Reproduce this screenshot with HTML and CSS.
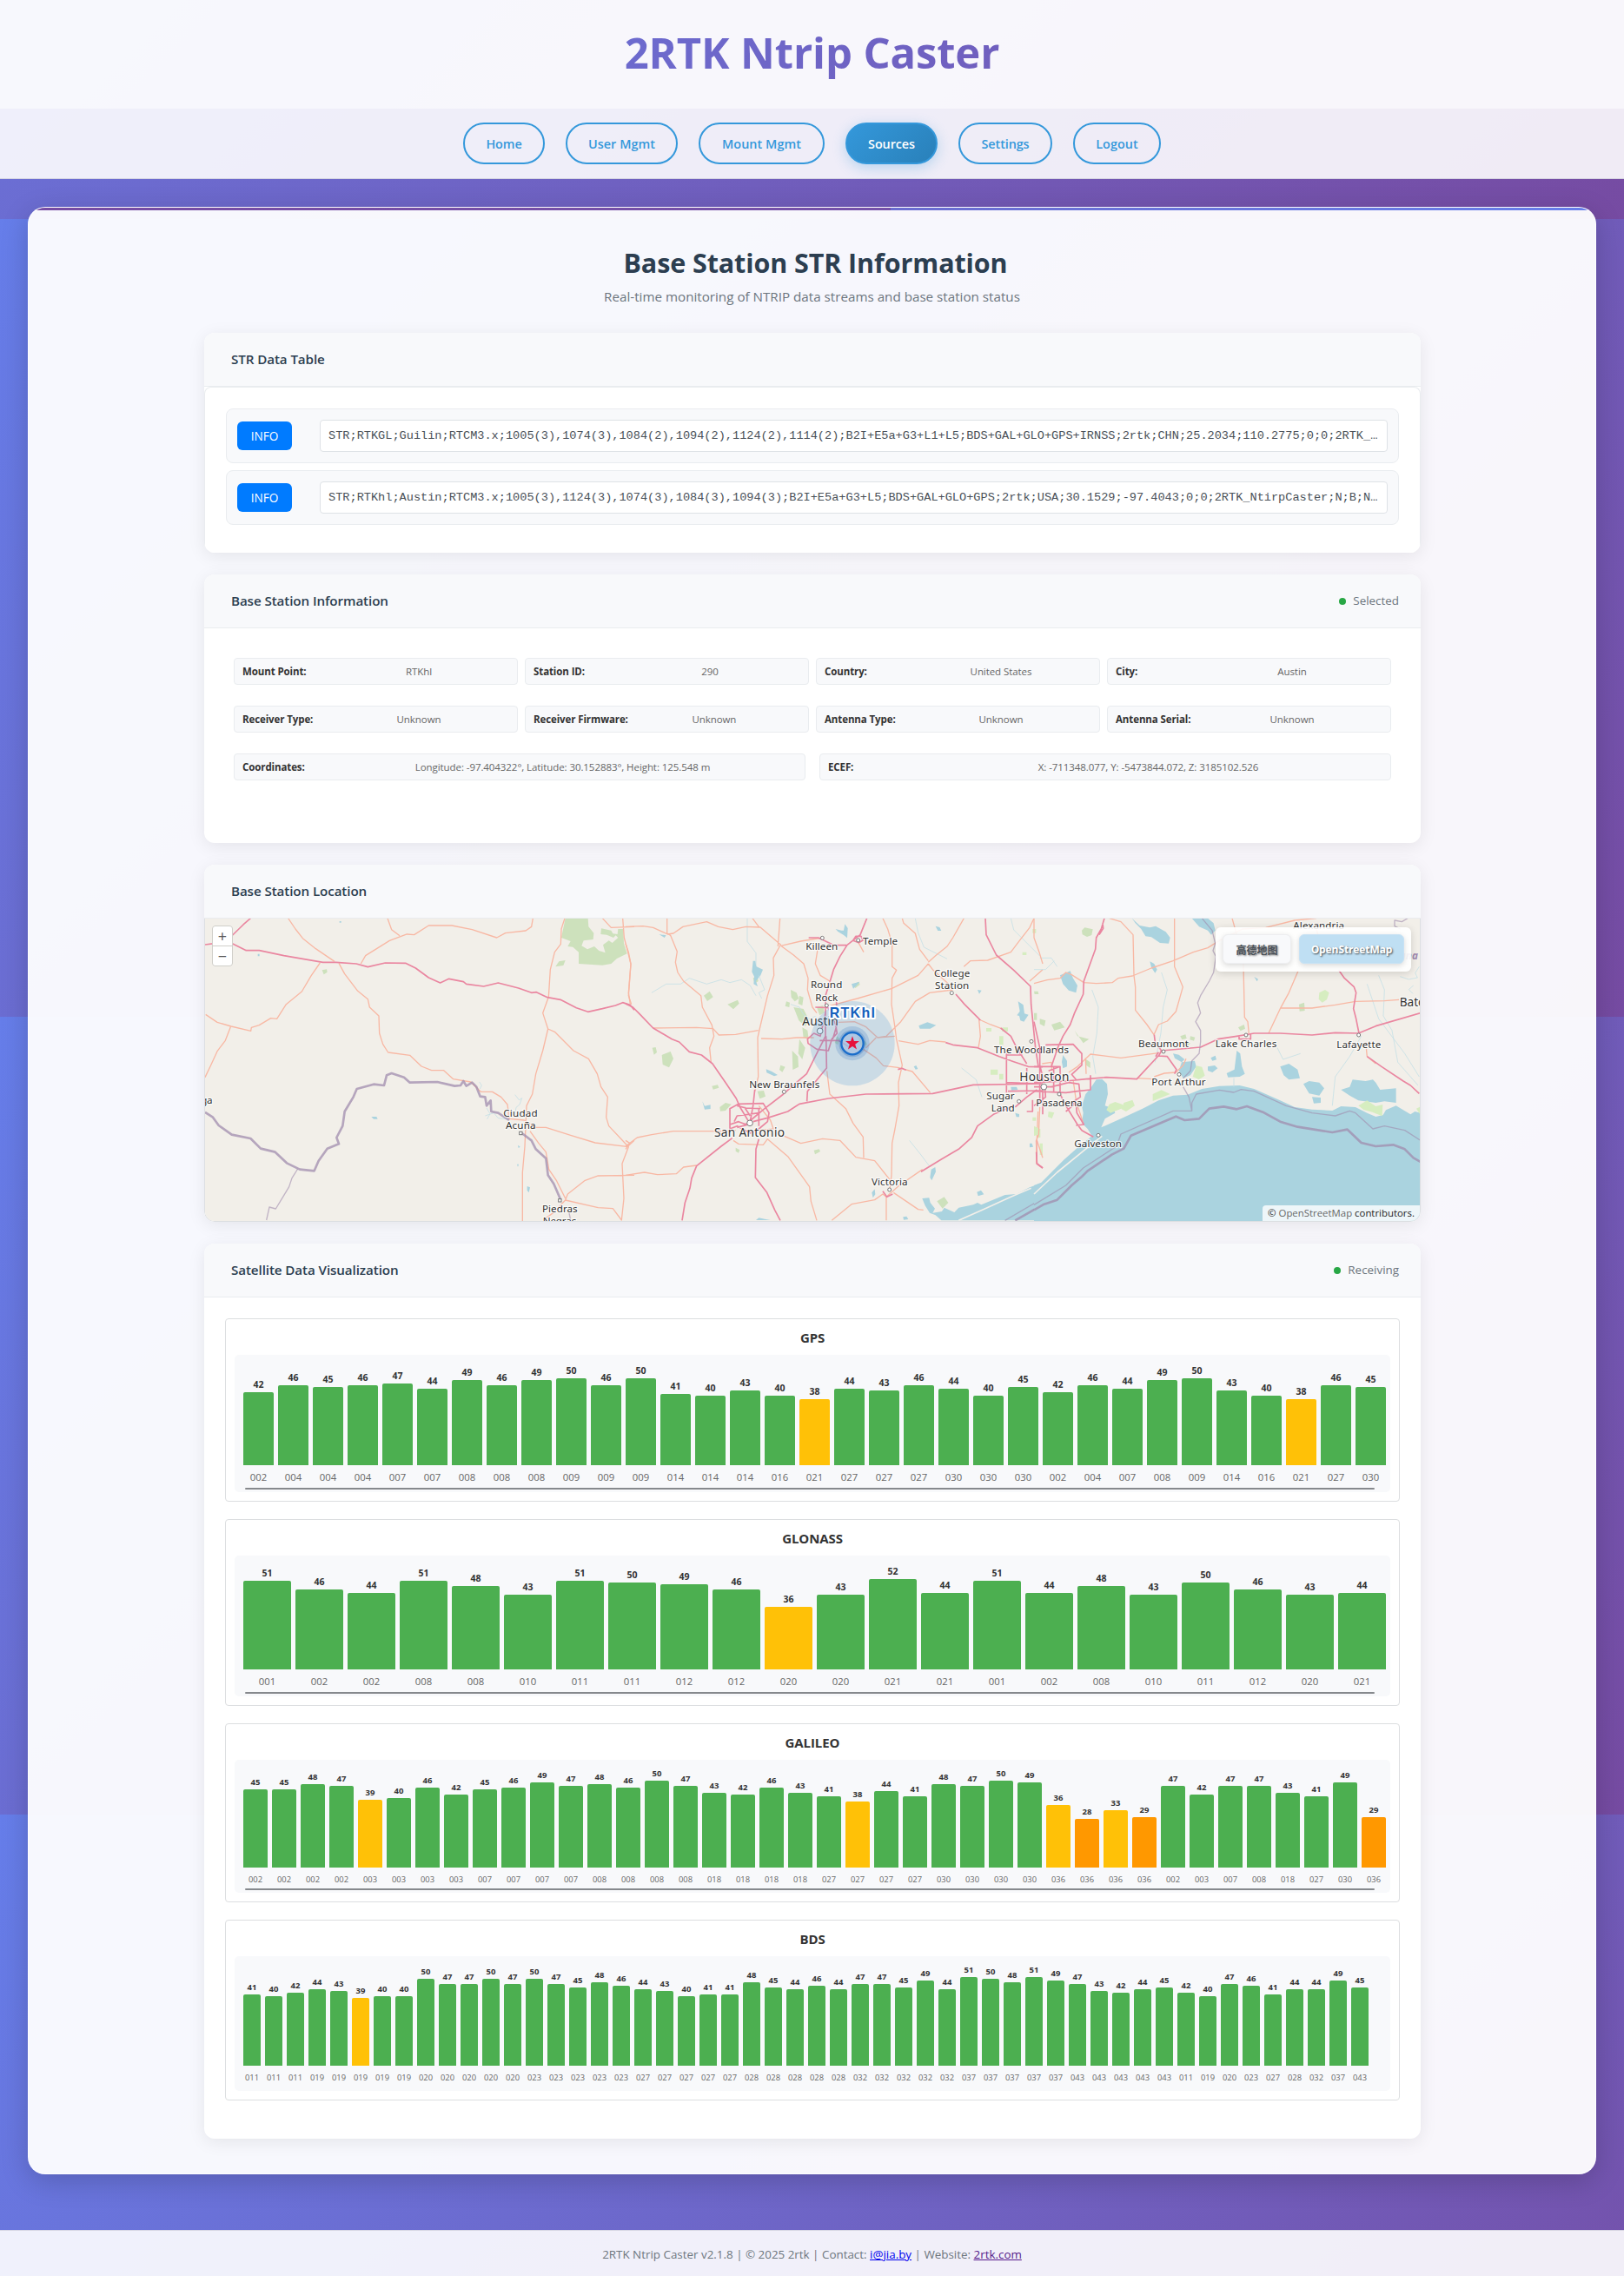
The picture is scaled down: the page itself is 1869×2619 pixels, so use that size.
FILE: index.html
```html
<!DOCTYPE html>
<html lang="en">
<head>
<meta charset="utf-8">
<title>2RTK Ntrip Caster</title>
<link rel="stylesheet" href="styles.css">
</head>
<body>
<header class="site-header"><h1>2RTK Ntrip Caster</h1></header>
<nav class="site-nav">
  <a class="nav-home">Home</a>
  <a class="nav-user">User Mgmt</a>
  <a class="nav-mount">Mount Mgmt</a>
  <a class="nav-sources active">Sources</a>
  <a class="nav-settings">Settings</a>
  <a class="nav-logout">Logout</a>
</nav>

<main class="content">
  <div class="accent"></div>
  <h2>Base Station STR Information</h2>
  <p class="subtitle">Real-time monitoring of NTRIP data streams and base station status</p>

  <section class="panel str-panel">
    <div class="panel-head"><h3>STR Data Table</h3></div>
    <div class="str-list">
      <div class="str-row"><span class="info-btn">INFO</span><code>STR;RTKGL;Guilin;RTCM3.x;1005(3),1074(3),1084(2),1094(2),1124(2),1114(2);B2I+E5a+G3+L1+L5;BDS+GAL+GLO+GPS+IRNSS;2rtk;CHN;25.2034;110.2775;0;0;2RTK_…</code></div>
      <div class="str-row"><span class="info-btn">INFO</span><code>STR;RTKhl;Austin;RTCM3.x;1005(3),1124(3),1074(3),1084(3),1094(3);B2I+E5a+G3+L5;BDS+GAL+GLO+GPS;2rtk;USA;30.1529;-97.4043;0;0;2RTK_NtirpCaster;N;B;N…</code></div>
    </div>
  </section>

  <section class="panel info-panel">
    <div class="panel-head"><h3>Base Station Information</h3><span class="status"><i></i>Selected</span></div>
    <div class="info-body">
      <div class="info-grid">
        <div class="cell"><b>Mount Point:</b><span>RTKhl</span></div>
        <div class="cell"><b>Station ID:</b><span>290</span></div>
        <div class="cell"><b>Country:</b><span>United States</span></div>
        <div class="cell"><b>City:</b><span>Austin</span></div>
        <div class="cell"><b>Receiver Type:</b><span>Unknown</span></div>
        <div class="cell"><b>Receiver Firmware:</b><span>Unknown</span></div>
        <div class="cell"><b>Antenna Type:</b><span>Unknown</span></div>
        <div class="cell"><b>Antenna Serial:</b><span>Unknown</span></div>
      </div>
      <div class="info-wide">
        <div class="cell"><b>Coordinates:</b><span>Longitude: -97.404322°, Latitude: 30.152883°, Height: 125.548 m</span></div>
        <div class="cell"><b>ECEF:</b><span>X: -711348.077, Y: -5473844.072, Z: 3185102.526</span></div>
      </div>
    </div>
  </section>

  <section class="panel map-panel">
    <div class="panel-head"><h3>Base Station Location</h3></div>
    <div class="map">
      <svg class="map-svg" viewBox="236 1058 1398 348" preserveAspectRatio="none">
        <rect x="230" y="1050" width="1410" height="360" fill="#f2efe9"/>
        <!-- western sheet -->
        <g transform="translate(230 980) scale(.33333)">
          <path class="wood" d="M1262 233L1340 233L1342 262L1360 284L1358 306L1325 310L1318 328L1338 340L1362 330L1378 345L1400 352L1392 325L1412 310L1424 318L1444 300L1436 292L1428 300L1405 290L1384 288L1386 268L1420 275L1426 286L1442 288L1444 270L1462 270L1464 320L1475 355L1440 372L1420 390L1390 395L1308 390L1308 350L1288 332L1270 330L1280 312L1248 300ZM1228 400L1240 382L1262 378L1255 396ZM422 412l16-3 2 10-12 8z"/>
          <path class="lake" d="M592 918l18 0 4 8-14 0zM200 356h6v8h-6zM482 243h6v5h-6zM1130 1158l10 4-4 18-6-8zM1095 1082l6 0-3 9zM1098 1016l8 6-6 4z"/>
          <path class="river" d="M985 915l30-10 15 18 40 4M990 888l12 20-10 18M1088 842l14 18 10-6-8 22-12 10-4 22M965 798l8 12-6 12"/>
          <path class="trunk" d="M305 233L330 270L355 302L400 338L465 382M415 387L385 430L352 486L298 530L266 580L245 578L205 602L178 610L176 622L108 606L60 592L20 565M106 608L88 655L60 692L38 740L18 782M480 388L500 425L545 484L580 512L586 540L618 570L620 630L632 668L650 696L725 706L765 744L800 758L842 758L875 788L935 798L970 832L1010 832L1040 850L1062 876L1068 925L1120 930M556 390L572 362L655 310L715 288L740 290L790 258L870 258L940 272L1025 300L1055 284L1125 276L1145 262L1150 233M648 233L662 272L690 293M1260 233L1248 270L1246 322L1225 350L1210 410L1204 505L1184 560L1202 615L1184 690L1160 770L1148 840L1128 880L1122 1020L1114 1110L1114 1280M1202 615L1225 625L1290 690L1342 718L1372 770L1385 815L1408 850L1403 920L1412 950L1478 1020L1500 1000M1140 968L1170 1010L1195 1040L1205 1100L1232 1140L1262 1200M1120 930L1160 955L1195 955L1280 982L1365 1008L1480 1022L1458 1080L1460 1120L1464 1200L1456 1275L1426 1235L1375 1232L1262 1206L1270 1185L1330 1138L1375 1122L1500 1120M1390 233L1420 265L1500 262M1460 233L1465 300L1478 350L1488 392L1480 490L1486 530M1262 1206L1220 1250L1185 1275"/>
          <path class="motor" d="M18 324L50 320M110 294L150 255L175 233M112 320L160 344L205 344L290 362L425 385L470 385L540 390L580 401L640 387L710 388L745 405L790 438L830 456L860 442L910 452L920 460L980 468L1030 456L1100 474L1145 490L1162 488L1200 506L1245 514L1300 542L1340 556L1390 545L1435 534L1460 524L1485 532L1500 550"/>
          <path class="border" d="M18 903L45 920L65 948L110 980L175 993L210 1028L260 1040L300 1078L345 1100L395 1105L410 1070L440 1028L480 1012L472 990L493 950L500 900L530 850L542 822L600 806L636 810L645 775L662 768L705 782L725 800L820 798L880 812L900 810L910 795L920 812L940 800L955 815L968 848L985 850L990 880L1004 862L1006 900L1030 905L1068 930M1112 975L1145 1000L1160 1030L1195 1062L1202 1120L1222 1150L1246 1205"/>
          <path class="border-thin" d="M338 1098L318 1130L308 1160L290 1190L262 1236L240 1230L230 1275M1275 1250l5 25"/>
          <g class="dots"><rect x="1103" y="970" width="10" height="10"/><rect x="1238" y="1202" width="10" height="10"/></g>
          <g class="town"><text x="1048" y="918" textLength="118">Ciudad</text><text x="1056" y="960" textLength="104">Acuña</text><text x="1182" y="1247" textLength="122">Piedras</text><text x="1184" y="1289" textLength="116">Negras</text><text x="4" y="872" textLength="40">ga</text></g>
        </g>
        <!-- central sheet -->
        <g transform="translate(720 980) scale(.33333)">
          <path class="wood" d="M125 705l30-12 10 25-15 30-22-10zM92 680l12-2 4 18-10 8zM270 500l20-15 12 20-20 14zM352 530l35-15 5 12-20 20zM440 440l14-10 4 20-12 8zM325 885l20-15 20 5-20 22-18 2zM455 830l22-2 6 20-20 8zM298 812l20-4 4 10-20 6zM570 480l20 10 8 20-14 10-12-14zM600 500l14 6-4 28-14-6zM555 520l12 4-2 16-14-4zM580 540l34 6 20 40-14 20-22-20zM610 610l18 10 4 30-18-4zM600 650l20 30-10 40-14-20zM575 690l20 20 2 36-20 10zM535 740l16 6-10 18-10-8zM783 462l22-10 4 10-16 12zM660 540l22-6 4 24-16 10zM730 640l10 10-8 20-10-8zM800 640l30 20 4 10-20 4zM380 1025l14 8-4 10-10-6zM650 1034l18-4 4 8-18 10zM1075 1210l25-15 14 20-20 20z"/>
          <path class="scrub" d="M1245 612h18v12h-18zM1260 755h25v18h-25zM1290 770h14v20h-14zM1290 640h14v30h-14zM1300 610h20v14h-20zM1370 350h14v10h-14zM1405 270h12v14h-12zM1422 960h10v30h-10zM1405 920h12v12h-12zM1430 1010h10v40h-10z"/>
          <path class="lake" d="M440 380l8 0 4 20 22 10-8 20-16 20 6 18-14-8 2-26-8-16zM725 270l20 5 8 0 4-22 10 14-2 34-12-10-20-12zM780 460l28-8-10 12-12 12zM1012 604l30-12 30 10-20 12-36 0zM1355 520l18 12 4 30 14 4-16 24-12-4-4-16-8-2 10-14zM1070 260l14 4 6 12-12 0zM1215 480l14 2-8 12zM115 288l25 4-6 8zM485 754l20 8 20 12-12 4-26-12zM265 865l8 16 20-4 0 14-20 2zM1330 815l20 0 4 10-22 2zM995 745l8-4 6 12-8 2zM450 1275l10-8 20 4 20 4zM1055 1100l14-8 2 16-14 30-6-10zM1024 1200L1048 1198L1052 1215L1068 1235L1060 1250L1092 1245L1100 1232L1135 1248L1150 1232L1200 1222L1215 1215L1228 1222L1310 1188L1350 1185L1395 1162L1440 1145V1276H1090L1070 1258L1050 1250L1034 1225ZM1213 1178l14-6 10 14-20 6zM958 1264l12-2 6 10-16 2zM850 1180l10-12 2 18-8 12zM1395 1010l8 0 4 12-12 2zM1345 905l14 4 0 10-10 0z"/>
          <path d="M1150 1276L1240 1236L1330 1195L1400 1165" class="sand"/>
          <path class="river" d="M90 490l50-30 50 0 30-20 60 20 50-15 30 10 40-10 30 20 20 35M460 430l20 50-20 10 10 20M420 233l0 80 30 40 0 40M570 530l30 10 14 25 20 15 20-8 14 10M1330 233l10 40 60 60 30 30M1000 233l10 50 20 50 80 40M1160 750l50 40 20 60M980 1000l40 50 30 40"/>
          <path class="trunk" d="M0 262L60 260L95 265L145 288L165 285L198 262L280 245L320 262L370 272L415 262L465 264L535 324L510 370L512 430L490 500L462 618L456 645L458 780L446 830M143 233L143 285L155 292L178 348L172 385L180 420L200 450L260 500L265 540L298 602L305 640L290 680L295 730M95 612L245 610L302 614L322 636L380 634L458 620M438 233L462 265M533 233L526 330M536 328L580 360L615 390L630 440L628 480L645 540L660 560M536 328L605 312L680 300M664 335L655 390L672 430L705 450M0 320L10 350L18 390L10 500L20 530M468 648L540 650L590 645L650 645M888 233L905 270L920 320L920 400L935 412L920 440L918 530L930 610L935 650L955 740L942 800L944 880L930 960L920 1010L918 1120L912 1170M955 233L960 250L1000 285L1015 340L1045 380M1045 385L1070 362L1110 330L1130 300L1168 233M1045 390L1010 430L980 445L920 475L800 510L705 535M1045 390L1060 410L1115 460M735 592L790 590L830 608L870 645L930 640M830 680L865 645M870 645L900 640L950 590L1000 520L1050 490L1130 480M820 685L865 715L890 742L940 748L990 762L1052 835M942 656L1010 668L1050 655L1105 660M1220 580L1225 640L1218 680M1168 400L1190 380L1250 378L1330 350L1360 310L1395 265L1410 233M1395 450L1440 410M1220 582L1260 600L1300 615M695 760L705 840L760 890L785 940L820 988L822 1060M548 985L605 1010L680 994L740 1000L795 1058L860 1070L912 1135M460 965L510 960L500 930L460 880M372 1000L390 1012L475 1015L490 995L560 1055L635 1160L640 1210L660 1276M0 1020L40 990L90 980L165 968L330 968L380 965M0 1120L65 1110L110 1118L175 1115L200 1092L245 1086M900 1195L900 1276M712 1276L780 1220L860 1205L888 1185L900 1195L945 1155L1025 1100M925 1180L1010 1238L1028 1240M800 310L822 350M1424 900L1420 1000L1440 1060M0 1030L15 1010L0 1000"/>
          <path class="motor" d="M0 528L25 540L50 565L95 612L160 650L185 660L220 694L262 705L300 735L345 800L382 855L395 885L425 935L430 945M833 233L810 290L765 325L740 365L718 410L706 450L690 500L690 640L650 720L625 770L590 800L545 840L480 890L432 930M632 300L665 300L720 326L762 326M785 310l10-15 18 0 6 14-14 8zM655 540L700 542L725 600L730 630L712 650L700 690L660 685L630 665L628 650L650 630L672 640L690 560M692 640L694 750L628 830L626 865M670 655L735 655L760 670L775 680M728 520L730 600L715 650M440 935L490 922L560 900L600 874L700 855L830 840L1060 838L1200 808L1440 804M446 825L440 880L430 935M360 890L390 874L475 872L495 905L490 935L460 960L430 975L385 950L360 960ZM375 935L385 915L460 905M385 880l30 8 50 2M410 885l20 30M360 945l30-10 20 8 30-2M460 890v60M440 940L385 955M368 992L330 1020L245 1088L228 1130L222 1165L205 1215L195 1276M460 995L450 1030L448 1128L488 1180L515 1240L534 1276M1242 233L1245 290L1280 360L1340 412L1398 468L1400 530L1415 680L1425 745M1140 495L1170 530L1215 575L1225 585M1105 662L1130 670L1215 680L1290 710L1340 728L1390 745L1440 746M1295 612L1330 640L1350 680L1385 735M1315 700L1315 835M1315 705L1370 705M1315 800L1440 805M1385 750L1385 840M1320 830L1440 828M1345 885L1385 850L1420 825M1340 880L1270 910L1215 950L1195 990L1150 1030L1090 1065L1020 1108M1385 900h20v-40M1418 1000L1420 1080L1440 1095M888 1175l14 20 20-10M940 755l14-4 14 6"/>
          <path class="border-thin" d="M1310 1276L1440 1200"/><path class="border" d="M1345 1276L1440 1222"/>
          <g class="dots"><circle cx="679" cy="301" r="6"/><circle cx="803" cy="309" r="6"/><circle cx="694" cy="534" r="6"/><circle cx="671" cy="622" r="10"/><circle cx="1126" cy="491" r="6"/><circle cx="1401" cy="658" r="6"/><circle cx="547" cy="832" r="6"/><circle cx="429" cy="940" r="10"/><circle cx="1358" cy="865" r="6"/><circle cx="911" cy="1170" r="6"/></g>
          <g class="town"><text x="622" y="342" textLength="111">Killeen</text><text x="819" y="323" textLength="120">Temple</text><text x="1065" y="435" textLength="124">College</text><text x="1068" y="477" textLength="118">Station</text><text x="639" y="475" textLength="109">Round</text><text x="655" y="518" textLength="78">Rock</text><text x="427" y="820" textLength="243">New Braunfels</text><text x="1246" y="858" textLength="97">Sugar</text><text x="1262" y="900" textLength="81">Land</text><text x="849" y="1156" textLength="125">Victoria</text><text x="1272" y="700" textLength="258">The Woodlands</text></g>
          <g class="city"><text x="610" y="602" textLength="124">Austin</text><text x="306" y="988" textLength="243">San Antonio</text></g>
          <circle cx="783" cy="665" r="146" fill="#318cd9" fill-opacity=".2"/>
          <circle cx="783" cy="665" r="59" fill="#2f6fbe" fill-opacity=".2"/><circle cx="783" cy="665" r="47" fill="#2f6fbe" fill-opacity=".28"/>
          <circle cx="783" cy="665" r="38" fill="#d8e4f2" fill-opacity=".5" stroke="#1a6dca" stroke-width="7"/>
          <path class="star" d="M783 640l5.800 17h18l-14.200 11 5.400 17.500-15-10.500-15 10.500 5.400-17.500-14.200-11h18z"/>
          <text class="marker" x="704" y="577" textLength="157">RTKhl</text>
        </g>
        <!-- eastern sheet -->
        <g transform="translate(1190 980) scale(.33333)">
          <path class="lake" d="M0 1155L25 1145L60 1110L105 1065L150 1025L200 985L185 960L165 940L170 905L165 880L178 840L195 820L215 790L235 788L252 805L255 840L245 880L275 890L280 905L245 925L232 955L300 925L375 890L430 862L480 845L530 842L580 822L640 812L710 810L760 822L850 862L900 885L960 893L1030 897L1060 882L1110 885L1150 905L1180 918L1205 912L1215 895L1250 880L1300 910L1315 900L1335 905V1278H0ZM338 233L365 258L400 265L420 260L455 280L470 300L465 320L435 318L405 298L385 295L370 270L350 250ZM545 233L570 262L600 275L612 290L626 275L620 250L600 233ZM90 430L125 415L135 440L150 465L145 490L120 482L100 460ZM400 382L415 390L425 410L418 422L405 402ZM700 690L712 700L718 745L728 770L710 780L670 782L665 768L692 755ZM850 745L880 735L910 755L918 785L880 790L862 775ZM930 805L950 795L985 800L1002 820L985 845L950 838ZM1060 825L1090 815L1100 790L1145 795L1170 790L1180 800L1195 825L1250 820L1250 870L1210 865L1180 870L1120 862L1090 845ZM510 730L555 725L560 745L540 775L515 785L500 760ZM480 700l20 4 20 16-10 10-24-14zM600 745l24-4 10 10-18 14-16-6zM610 715l16-8 4 14-14 4zM960 850l30 2 0 18-24 2zM100 705l14 20 0 20-14 6-4-22zM760 435l14 8-4 8z"/>
          <path class="sand" d="M0 1185L80 1110L200 1012L235 985"/>
          <path class="river" d="M20 370l40 0 20 30M0 410l40 0 30-30M200 480l22 60-5 90-14 80 10 60M440 420l20 60-14 60-8 90-20 100M1190 430l20 50-4 90 30 50 20 110 70 80M1330 400l-14 22 8 16-30 6-30-10M1310 465l-16 14 14 14M1130 640l-40 70-50 70-10 100M1150 460l40 120 90 120 50 80M690 785v30M840 680l20 40 60-20"/>
          <path class="wood" d="M165 275l10-10 28 6-4 20-16 6-16-8zM0 560h10v24H0zM20 580l20 6-4 20-16-8zM60 600l30-10 16 20-36 10zM140 620l10 20 40 10-20 14zM180 720l14 10 0 20-14-10zM505 640l18-6 4 14-16 4zM540 640l16 4-4 12-14-4zM915 530l18-6 2 28-18 2zM705 610l20-10 4 14-16 8zM510 660l30 4-8 8-20-4zM0 485l14 0 2 10-14 0z"/>
          <path class="scrub" d="M985 490l20-10 14 10-8 24-16 10-12-12zM410 840l30-14 30 14-60 24zM560 742l20 4 10 30-20 14-22-10zM260 875l20-8 24 8 10 10-50 20-14-10zM310 870l30-10 8 20-30 20-16-8zM1120 880l30-18 30 20 24-6-2 40-34-14-30-8zM1320 890l12-6v24zM0 950l20 10-4 20-16 4zM50 900l20 4-8 20-14-6z"/>
          <path class="trunk" d="M0 233L0 300L18 350L30 390M260 233L300 245L342 290L345 430L350 470L350 550L390 600L414 635L430 600L460 588L490 555L514 470L485 400L485 233M0 458L45 446L90 440L110 420L130 428L172 455L215 458L270 455L290 440L340 432L405 405L480 380L550 350L600 335L640 310L720 270L800 265L900 240L975 233M684 233L700 290L722 350L727 575L738 590L742 630M912 415L880 490L850 545L810 630M850 543L960 543L1040 532L1110 520L1210 518L1260 514M120 765L150 745L195 702L300 715L430 698M178 715L180 770M1145 660L1150 710L1180 735M355 785L410 788M415 780L450 768L490 765L515 740L525 718M28 735L60 730L62 760M20 885L16 980L8 1000L8 1080M135 790L145 860M150 880L170 940M975 270L985 310M980 250L985 270"/>
          <path class="motor" d="M243 233L232 270L215 300L212 340L172 450L170 495L140 560L125 600L100 640L82 680L60 745M225 290l14-22-2-18M0 590L20 680L20 740L35 800M0 745H90M0 800L110 795L180 788L250 782L355 788L432 705L440 690L575 678L635 650L700 640L760 630L850 630L960 636L1040 628L1120 630L1180 605L1335 560M415 635L418 660L440 690M430 708L460 710L492 755L485 770M430 695L420 710M1052 412L1072 440L1105 470L1112 490L1103 545L1112 580L1122 630M708 640v10h40v-20M1150 710L1200 745L1275 795L1300 810L1330 838M40 670L135 668L165 700L165 740L130 772L145 790M195 775V825L150 830L110 835L0 830M68 745V830M20 700V860M50 760L90 745V835M0 815H60L120 800L155 805L160 850L130 870L160 880M90 840L110 880L150 945L165 965L205 988M110 900L145 870L148 905L172 945L145 948M8 1040L10 1080L30 1095M38 820L40 850L0 880M30 820L30 910"/>
          <path class="border" d="M0 1240L35 1220L80 1205L130 1155L165 1125L185 1105L270 1048L310 1028L335 983L490 917L520 930L570 925L605 890L655 883L700 892L735 882L790 902L850 935L910 953L1030 972L1082 962L1130 1008L1180 1020L1240 1015L1280 1030L1310 1060L1335 1074"/>
          <path class="border-thin" d="M0 1222L110 1155L170 1095L285 1020L300 978L480 898L545 898L535 850L515 815M545 898L545 870L560 840L640 826L690 834L715 824L760 830L870 880L960 905L1040 915L1090 898L1110 905L1170 960L1210 950L1280 965L1335 1000M580 233L615 275L626 320L618 345L628 365L620 420L605 450L575 500L565 525L575 560L558 590L575 620L575 660L570 700L545 725L540 760L515 785M1290 233L1270 245L1245 240L1245 260L1265 270"/>
          <g class="dots"><circle cx="732" cy="636" r="6"/><circle cx="1121" cy="636" r="6"/><circle cx="447" cy="693" r="6"/><circle cx="501" cy="772" r="6"/><circle cx="34" cy="815" r="10"/><circle cx="87" cy="840" r="6"/><circle cx="222" cy="982" r="6"/></g>
          <g class="town"><text x="895" y="270" textLength="176">Alexandria</text><text x="360" y="679" textLength="174">Beaumont</text><text x="626" y="679" textLength="212">Lake Charles</text><text x="1045" y="681" textLength="153">Lafayette</text><text x="406" y="811" textLength="187">Port Arthur</text><text x="7" y="881" textLength="160">Pasadena</text><text x="139" y="1024" textLength="164">Galveston</text></g>
          <g class="city"><text x="-50" y="796" textLength="171">Houston</text><text x="1262" y="537">Baton</text></g>
          <text class="state" x="1158" y="376" textLength="168">Louisiana</text>
        </g>
      </svg>
      <div class="zoom"><span>+</span><span>−</span></div>
      <div class="switcher"><span class="gaode">高德地图</span><span class="osm">OpenStreetMap</span></div>
      <div class="attribution">© <span>OpenStreetMap</span> contributors.</div>
    </div>
  </section>

  <section class="panel sat-panel">
    <div class="panel-head"><h3>Satellite Data Visualization</h3><span class="status"><i></i>Receiving</span></div>
    <div class="sat-body">
      <div class="sat-box gps"><h4>GPS</h4><div class="chart" id="gps"></div></div>
      <div class="sat-box glonass"><h4>GLONASS</h4><div class="chart" id="glonass"></div></div>
      <div class="sat-box galileo"><h4>GALILEO</h4><div class="chart" id="galileo"></div></div>
      <div class="sat-box bds"><h4>BDS</h4><div class="chart" id="bds"></div></div>
    </div>
  </section>
</main>

<footer class="site-footer"><p>2RTK Ntrip Caster v2.1.8 | © 2025 2rtk | Contact: <a class="mail">i@jia.by</a> | Website: <a class="site">2rtk.com</a></p></footer>
<script src="charts.js"></script>
</body>
</html>
```
FILE: styles.css
```css
* { box-sizing: border-box; margin: 0; padding: 0; }
body {
  font-family: "Open Sans", "Noto Sans", sans-serif;
  color: #333;
  background: linear-gradient(135deg, #667eea 0%, #764ba2 100%) 0 252px / 100% 918px repeat-y;
  min-height: 2619px;
}
.site-header { height: 125px; background: rgba(255,255,255,.95); }
.site-header h1 {
  font-size: 49px; line-height: 121px; text-align: center; font-weight: 700; letter-spacing: -.12px;
  background: linear-gradient(135deg, #667eea, #764ba2);
  -webkit-background-clip: text; background-clip: text; color: transparent;
}
.site-nav {
  height: 81px; display: flex; justify-content: center; gap: 24px; padding-top: 16px;
  background: rgba(255,255,255,.89); border-bottom: 1px solid rgba(190,190,205,.5);
}
.site-nav a {
  height: 48px; line-height: 45px; text-align: center; border: 2px solid #3498db; border-radius: 25px;
  color: #3498db; font-size: 14.4px; font-weight: 600; letter-spacing: .05px;
}
.site-nav .nav-home { width: 94px; letter-spacing: -.1px; }
.site-nav .nav-user { width: 129px; }
.site-nav .nav-mount { width: 145px; }
.site-nav .nav-sources { width: 106px; letter-spacing: -.1px; }
.site-nav .nav-settings { width: 108px; letter-spacing: -.1px; }
.site-nav .nav-logout { width: 101px; }
.site-nav .active {
  color: #fff; background: linear-gradient(135deg, #3498db, #2980b9);
  box-shadow: 0 4px 15px rgba(52,152,219,.3);
}

.content {
  margin: 32px 32px 64px; height: 2264px; padding: 0 202px; overflow: hidden;
  background: rgba(255,255,255,.95); border: 1px solid rgba(255,255,255,.8); border-radius: 20px;
  box-shadow: 0 8px 32px rgba(0,0,0,.18);
}
.accent { height: 3px; margin: 0 -202px; background: linear-gradient(90deg, #764ba2 0, #7551a8 55%, #6a6ccf 55%, #667eea 100%); }
.content h2 { margin-top: 38px; padding-left: 8px; font-size: 30.5px; line-height: 44px; text-align: center; color: #2c3e50; font-weight: 700; letter-spacing: -.1px; }
.subtitle { margin-top: 4px; font-size: 15.2px; line-height: 26px; text-align: center; color: #6c757d; }

.panel { width: 1400px; background: #fff; border-radius: 12px; box-shadow: 0 4px 20px rgba(0,0,0,.08); margin-bottom: 25px; overflow: hidden; }
.panel-head { height: 62px; display: flex; justify-content: space-between; padding: 0 25px 0 31px; background: #f8f9fb; border-bottom: 1px solid #e9ecef; line-height: 61px; }
.panel-head h3 { font-size: 15.2px; font-weight: 600; color: #2c3e50; letter-spacing: -.1px; }
.status { display: flex; align-items: center; gap: 8px; font-size: 13.4px; color: #6c757d; }
.status i { width: 8px; height: 8px; border-radius: 50%; background: #28a745; }

.str-panel { height: 253px; margin-top: 29px; }
.str-list { height: 191px; border: 1px solid #e9ecef; border-bottom-color: #fff; border-radius: 8px; padding: 24px; display: flex; flex-direction: column; gap: 8px; }
.str-row { height: 63px; display: flex; align-items: center; padding: 0 12px; background: #f8f9fb; border: 1px solid #e9ecef; border-radius: 8px; }
.info-btn { width: 63px; height: 33px; margin-right: 32px; border-radius: 6px; background: #007bff; color: #fff; text-align: center; font-size: 13.600px; font-weight: 500; line-height: 33px; }
.str-row code { flex: 1; height: 37px; line-height: 35px; padding-left: 9px; background: #fff; border: 1px solid #dee2e6; border-radius: 4px; color: #495057; font-family: "Liberation Mono", monospace; font-size: 13.600px; white-space: nowrap; }

.info-panel { height: 309px; }
.info-body { padding: 34px; }
.info-grid { display: grid; grid-template-columns: repeat(4, 327px); gap: 24px 8px; }
.info-wide { display: grid; grid-template-columns: 658px 658px; gap: 16px; margin-top: 24px; }
.cell { height: 31px; display: flex; align-items: center; padding: 0 9px; background: #f8f9fb; border: 1px solid #e9ecef; border-radius: 4px; font-size: 11.5px; }
.cell b { min-width: 99px; font-weight: 700; color: #333; letter-spacing: -.1px; }
.cell span { flex: 1; text-align: center; color: #666; letter-spacing: -.07px; }

.map-panel { height: 411px; }
.map { position: relative; height: 349px; border: solid #dcdfe2; border-width: 0 1px 1px; border-radius: 0 0 12px 12px; overflow: hidden; }
.map-svg { display: block; width: 1398px; height: 348px; }
.map-svg path { fill: none; stroke-linejoin: round; }
.map-svg .wood { fill: #c3ddb0; opacity: .8; }
.map-svg .scrub { fill: #d6edc0; }
.map-svg .lake { fill: #aad3df; }
.map-svg .star { fill: #e6103c; }
.map-svg .sand { stroke: #f2efe9; stroke-width: 5; }
.map-svg .river { stroke: #c4dfe6; stroke-width: 3; opacity: .8; }
.map-svg .trunk { stroke: #f8b8a4; stroke-width: 4; }
.map-svg .motor { stroke: #ea86a0; stroke-width: 5; }
.map-svg .border { stroke: #a08cad; stroke-width: 8; opacity: .75; }
.map-svg .border-thin { stroke: #a08cad; stroke-width: 4; opacity: .6; }
.dots { fill: #fff; stroke: #777; stroke-width: 3; }
.town, .city { font-family: "Noto Sans", sans-serif; font-size: 35px; fill: #333; stroke: rgba(255,255,255,.75); stroke-width: 7; paint-order: stroke; stroke-linejoin: round; }
.city { font-size: 41px; }
.state { font: italic 700 35px "Noto Sans", sans-serif; fill: #a08ab0; }
.marker { font: 700 48px "Liberation Sans", sans-serif; fill: #1560bd; stroke: #fff; stroke-width: 12; paint-order: stroke; stroke-linejoin: round; }
.zoom { position: absolute; left: 8px; top: 8px; width: 24px; height: 47px; display: flex; flex-direction: column; gap: 1px; border: 1px solid #d0cfca; border-radius: 4px; background: #d0cfca; overflow: hidden; }
.zoom span { flex: 1; background: #fff; color: #555; text-align: center; font-size: 18px; line-height: 22px; }
.switcher { position: absolute; left: 1163px; top: 10px; width: 225px; height: 51px; padding: 8px; display: flex; gap: 9px; border-radius: 6px; background: rgba(255,255,255,.9); box-shadow: 0 2px 10px rgba(0,0,0,.15); }
.switcher span { height: 34px; line-height: 33px; text-align: center; border-radius: 6px; font-size: 12px; font-weight: 700; border: 1px solid #edeef0; box-shadow: 0 2px 6px rgba(0,0,0,.15); }
.switcher .gaode { width: 79px; background: #f8f9fb; color: #495057; font-family: "Noto Sans CJK SC", sans-serif; text-shadow: 1px 1px 2px rgba(0,0,0,.5); }
.switcher .osm { width: 121px; background: #bfdff3; border-color: #c8e2f4; color: #fff; font-size: 12px; letter-spacing: -.1px; text-shadow: 1px 1px 2px rgba(0,0,0,.7); }
.attribution { position: absolute; right: 0; bottom: 0; width: 181px; height: 18px; line-height: 18px; text-align: center; font-size: 11.400px; color: #222; white-space: nowrap; background: rgba(255,255,255,.8); border-radius: 4px 0 0 0; }
.attribution span { color: #666; }

.sat-panel { height: 1030px; margin-bottom: 0; }
.sat-body { padding: 24px; display: flex; flex-direction: column; gap: 20px; }
.sat-box { border: 1px solid #dcdee0; border-radius: 4px; padding: 0 10px; }
.gps { height: 211px; }
.glonass { height: 215px; }
.galileo { height: 206px; }
.bds { height: 208px; }
.sat-box h4 { height: 41px; line-height: 43px; text-align: center; font-size: 15px; font-weight: 700; letter-spacing: -.1px; }
.chart { position: relative; display: flex; gap: 5px; align-items: flex-end; height: 158px; padding: 0 4px 13px 10px; background: #f8f9fb; border-radius: 5px; }
.glonass .chart { height: 162px; }
.galileo .chart { height: 153px; }
.bds .chart { height: 155px; padding-bottom: 11px; }
.chart:after { content: ""; position: absolute; left: 12px; right: 18px; bottom: 3px; height: 2px; border-radius: 1px; background: #86898d; }
.bds .chart:after { display: none; }
.sat { flex: none; width: 35px; text-align: center; }
.glonass .sat { width: 55px; }
.galileo .sat { width: 28px; }
.bds .sat { width: 20px; }
.sat b { display: block; font-size: 10.500px; line-height: 16px; font-weight: 700; margin-bottom: 1px; }
.bar { background: #4caf50; border-radius: 2px 2px 0 0; }
.bar.fair { background: #ffc107; }
.bar.weak { background: #ff9800; }
.sat span { display: block; margin-top: 4px; height: 14px; line-height: 20px; font-size: 11.300px; color: #666; white-space: nowrap; }
.galileo .sat b, .bds .sat b { font-size: 9.500px; line-height: 14px; margin-bottom: 1px; }
.galileo .sat span { height: 12px; line-height: 19px; font-size: 9.400px; }
.bds .sat span { height: 14px; line-height: 20px; font-size: 9.400px; }

.site-footer { height: 53px; background: rgba(255,255,255,.9); border-top: 1px solid rgba(190,190,205,.5); text-align: center; font-size: 13.400px; line-height: 54px; color: #6c757d; }
.site-footer a { text-decoration: underline; }
.site-footer .mail { color: #0000ee; }
.site-footer .site { color: #551a8b; }
```
FILE: charts.js
```js
// Signal strength (dB-Hz) per satellite; ids are given as "id*count" runs.
const charts = {
  gps: {
    ids: "002 004*3 007*2 008*3 009*3 014*3 016 021 027*3 030*3 002 004 007 008 009 014 016 021 027 030",
    snr: [42,46,45,46,47,44,49,46,49,50,46,50,41,40,43,40,38,44,43,46,44,40,45,42,46,44,49,50,43,40,38,46,45]
  },
  glonass: {
    ids: "001 002*2 008*2 010 011*2 012*2 020*2 021*2 001 002 008 010 011 012 020 021",
    snr: [51,46,44,51,48,43,51,50,49,46,36,43,52,44,51,44,48,43,50,46,43,44]
  },
  galileo: {
    ids: "002*4 003*4 007*4 008*4 018*4 027*4 030*4 036*4 002 003 007 008 018 027 030 036",
    snr: [45,45,48,47,39,40,46,42,45,46,49,47,48,46,50,47,43,42,46,43,41,38,44,41,48,47,50,49,36,28,33,29,47,42,47,47,43,41,49,29]
  },
  bds: {
    ids: "011*3 019*5 020*5 023*5 027*5 028*5 032*5 037*5 043*5 011 019 020 023 027 028 032 037 043",
    snr: [41,40,42,44,43,39,40,40,50,47,47,50,47,50,47,45,48,46,44,43,40,41,41,48,45,44,46,44,47,47,45,49,44,51,50,48,51,49,47,43,42,44,45,42,40,47,46,41,44,44,49,45]
  }
};
for (const [name, data] of Object.entries(charts)) {
  const ids = data.ids.split(" ").flatMap(run => {
    const [id, n] = run.split("*");
    return Array(Number(n || 1)).fill(id);
  });
  document.getElementById(name).innerHTML = data.snr.map((v, i) => {
    const level = v >= 40 ? "" : v >= 30 ? "fair" : "weak";
    return `<div class="sat"><b>${v}</b><div class="bar ${level}" style="height:${v * 2}px"></div><span>${ids[i]}</span></div>`;
  }).join("");
}
```
